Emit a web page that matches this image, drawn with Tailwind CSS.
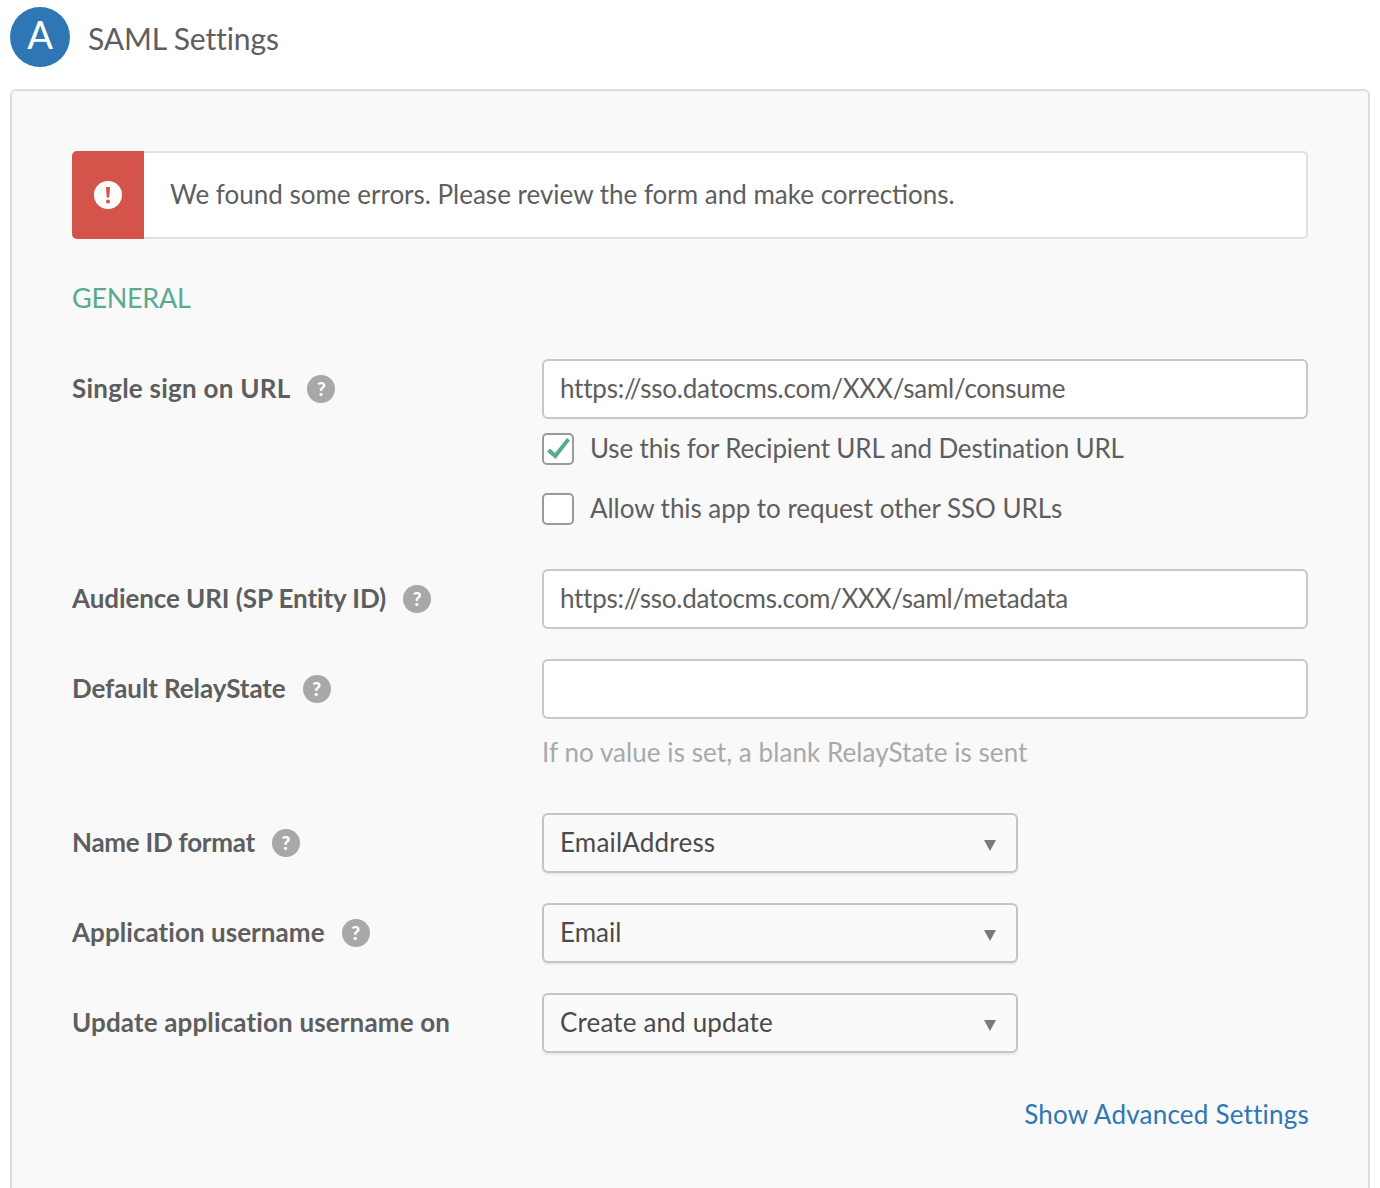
<!DOCTYPE html>
<html lang="en">
<head>
  <meta charset="UTF-8">
  <title>SAML Settings</title>
  <script src="https://cdn.jsdelivr.net/npm/@tailwindcss/browser@4"></script>
</head>
<body class="bg-white h-[1188px] overflow-hidden font-['Lato','Open_Sans',sans-serif] text-[#5e5e5e]">
  <!-- Header -->
  <div class="flex items-center h-[89px] pl-[10px] pb-[15px] pt-[3px]">
    <div class="-mt-[4px] w-[60px] h-[60px] rounded-full bg-[#2f76b5] text-white text-[38px] flex items-center justify-center pb-[5px]">A</div>
    <h1 class="ml-[18px] text-[30px] tracking-[-0.1px] text-[#5e5e5e]">SAML Settings</h1>
  </div>

  <!-- Panel -->
  <div class="mx-[10px] h-[1130px] border-2 border-[#dddddd] rounded-t-[6px] bg-[#f9f9f9] px-[60px] pt-[60px]">
    <!-- Error -->
    <div class="flex h-[88px] rounded-[5px] border-2 border-l-0 border-[#e1e1e1] bg-white">
      <div class="w-[72px] -my-[2px] rounded-l-[5px] bg-[#d4534b] flex items-center justify-center">
        <svg class="w-[28px] h-[28px]" viewBox="0 0 28 28">
          <circle cx="14" cy="14" r="14" fill="#fff"/>
          <path d="M12 6h4l-.7 10.500h-2.600z" fill="#d4534b"/>
          <circle cx="14" cy="20.500" r="2" fill="#d4534b"/>
        </svg>
      </div>
      <p class="ml-[26px] self-center pb-[2px] text-[26px]">We found some errors. Please review the form and make corrections.</p>
    </div>

    <h2 class="mt-[41px] h-[36px] leading-[36px] text-[27px] tracking-[-0.3px] text-[#5aab8e]">GENERAL</h2>

    <!-- Single sign on -->
    <div class="mt-[43px] flex">
      <div class="w-[470px] h-[60px] flex items-center">
        <span class="pb-[2px] text-[26px] font-bold tracking-[0.24px]">Single sign on URL</span>
        <span class="ml-[17px] w-[28px] h-[28px] rounded-full bg-[#a8a8a8] text-white text-[19px] font-black flex items-center justify-center">?</span>
      </div>
      <div class="w-[766px]">
        <div class="h-[60px] border-2 border-[#c8c8c8] rounded-[6px] bg-white flex items-center px-[16px] pb-[2px] text-[26px] tracking-[-0.22px]">https://sso.datocms.com/XXX/saml/consume</div>
        <div class="mt-[14px] h-[32px] flex items-center">
          <span class="w-[32px] h-[32px] border-2 border-[#9a9a9a] rounded-[5px] bg-white flex items-center justify-center">
            <svg class="w-[28px] h-[28px]" viewBox="0 0 28 28"><path d="M3 16.500l3-3 5 4.500L23 3l3 2.500L11.500 24z" fill="#5aab8e"/></svg>
          </span>
          <span class="ml-[16px] pb-[2px] text-[26px] tracking-[-0.15px]">Use this for Recipient URL and Destination URL</span>
        </div>
        <div class="mt-[28px] h-[32px] flex items-center">
          <span class="w-[32px] h-[32px] border-2 border-[#9a9a9a] rounded-[5px] bg-white"></span>
          <span class="ml-[16px] pb-[2px] text-[26px] tracking-[-0.05px]">Allow this app to request other SSO URLs</span>
        </div>
      </div>
    </div>

    <!-- Audience URI -->
    <div class="mt-[44px] flex">
      <div class="w-[470px] h-[60px] flex items-center">
        <span class="pb-[2px] text-[26px] font-bold tracking-[-0.09px]">Audience URI (SP Entity ID)</span>
        <span class="ml-[17px] w-[28px] h-[28px] rounded-full bg-[#a8a8a8] text-white text-[19px] font-black flex items-center justify-center">?</span>
      </div>
      <div class="w-[766px] h-[60px] border-2 border-[#c8c8c8] rounded-[6px] bg-white flex items-center px-[16px] pb-[2px] text-[26px] tracking-[-0.27px]">https://sso.datocms.com/XXX/saml/metadata</div>
    </div>

    <!-- Default RelayState -->
    <div class="mt-[30px] flex">
      <div class="w-[470px] h-[60px] flex items-center">
        <span class="pb-[2px] text-[26px] font-bold tracking-[-0.1px]">Default RelayState</span>
        <span class="ml-[17px] w-[28px] h-[28px] rounded-full bg-[#a8a8a8] text-white text-[19px] font-black flex items-center justify-center">?</span>
      </div>
      <div class="w-[766px]">
        <div class="h-[60px] border-2 border-[#c8c8c8] rounded-[6px] bg-white"></div>
        <p class="mt-[15px] h-[36px] leading-[36px] text-[26px] tracking-[0.07px] text-[#a9a9a9]">If no value is set, a blank RelayState is sent</p>
      </div>
    </div>

    <!-- Name ID format -->
    <div class="mt-[43px] flex">
      <div class="w-[470px] h-[60px] flex items-center">
        <span class="pb-[2px] text-[26px] font-bold tracking-[-0.27px]">Name ID format</span>
        <span class="ml-[17px] w-[28px] h-[28px] rounded-full bg-[#a8a8a8] text-white text-[19px] font-black flex items-center justify-center">?</span>
      </div>
      <div class="w-[476px] h-[60px] border-2 border-[#c4c4c4] rounded-[6px] bg-[#fafafa] shadow-[0_2px_2px_rgba(0,0,0,0.06)] flex items-center justify-between pl-[16px] pr-[20px] text-[26px] text-[#4a4a4a]">
        <span class="pb-[2px] tracking-[0.2px]">EmailAddress</span>
        <svg class="mt-[4px] w-[12px] h-[11px]" viewBox="0 0 12 11"><path d="M0 0h12L6 11z" fill="#7a7a7a"/></svg>
      </div>
    </div>

    <!-- Application username -->
    <div class="mt-[30px] flex">
      <div class="w-[470px] h-[60px] flex items-center">
        <span class="pb-[2px] text-[26px] font-bold tracking-[0.05px]">Application username</span>
        <span class="ml-[17px] w-[28px] h-[28px] rounded-full bg-[#a8a8a8] text-white text-[19px] font-black flex items-center justify-center">?</span>
      </div>
      <div class="w-[476px] h-[60px] border-2 border-[#c4c4c4] rounded-[6px] bg-[#fafafa] shadow-[0_2px_2px_rgba(0,0,0,0.06)] flex items-center justify-between pl-[16px] pr-[20px] text-[26px] text-[#4a4a4a]">
        <span class="pb-[2px]">Email</span>
        <svg class="mt-[4px] w-[12px] h-[11px]" viewBox="0 0 12 11"><path d="M0 0h12L6 11z" fill="#7a7a7a"/></svg>
      </div>
    </div>

    <!-- Update username -->
    <div class="mt-[30px] flex">
      <div class="w-[470px] h-[60px] flex items-center">
        <span class="pb-[2px] text-[26px] font-bold tracking-[0.14px]">Update application username on</span>
      </div>
      <div class="w-[476px] h-[60px] border-2 border-[#c4c4c4] rounded-[6px] bg-[#fafafa] shadow-[0_2px_2px_rgba(0,0,0,0.06)] flex items-center justify-between pl-[16px] pr-[20px] text-[26px] text-[#4a4a4a]">
        <span class="pb-[2px] tracking-[0.15px]">Create and update</span>
        <svg class="mt-[4px] w-[12px] h-[11px]" viewBox="0 0 12 11"><path d="M0 0h12L6 11z" fill="#7a7a7a"/></svg>
      </div>
    </div>

    <div class="mt-[43px] -mr-[1px] text-right text-[26px] text-[#2f76b5] leading-[36px] tracking-[0.22px]">Show Advanced Settings</div>
  </div>
</body>
</html>
